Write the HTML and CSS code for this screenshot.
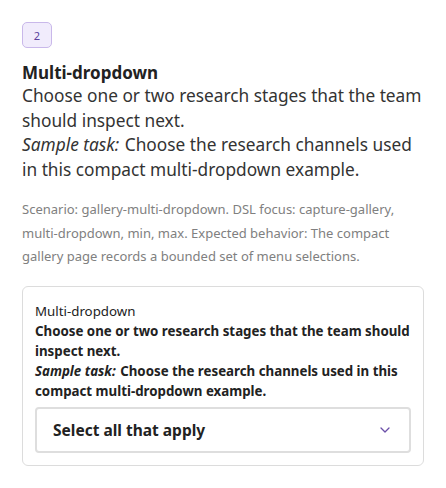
FILE: index.html
```html
<!DOCTYPE html>
<html>
<head>
<meta charset="utf-8">
<link rel="stylesheet" href="styles.css">
</head>
<body>
<div class="page">
  <div class="badge">2</div>
  <h1 class="title">Multi-dropdown</h1>
  <p class="desc">Choose one or two research stages that the team should inspect next.<br><em>Sample task:</em> <span>Choose the research channels used </span><span>in this compact multi-dropdown example.</span></p>
  <p class="meta">Scenario: gallery-multi-dropdown. DSL focus: capture-gallery, multi-dropdown, min, max. Expected behavior: The compact gallery page records a bounded set of menu selections.</p>
  <div class="card">
    <div class="card-label">Multi-dropdown</div>
    <div class="card-desc">Choose one or two research stages that the team should inspect next.<br><em>Sample task:</em> <span>Choose the research channels used in this </span><span>compact multi-dropdown example.</span></div>
    <div class="select">
      <span class="select-text">Select all that apply</span>
      <svg class="chev" width="12" height="8" viewBox="0 0 12 8"><path d="M2 2l4 4 4-4" fill="none" stroke="#6b4fa8" stroke-width="1.3" stroke-linecap="round" stroke-linejoin="round"/></svg>
    </div>
  </div>
</div>
</body>
</html>
```
FILE: styles.css
```css
html, body { margin: 0; padding: 0; background: #fff; }
body { font-family: "Noto Sans", "Open Sans", sans-serif; color: #222; }
.page { padding: 22px 22px 0 22px; }
.badge {
  width: 30px; height: 26px; box-sizing: border-box;
  border: 1px solid #c9b8ea; background: #f1ecfc; border-radius: 5px;
  color: #5b3f9c; font-size: 11px; display: flex; align-items: center; justify-content: center;
}
.title { font-size: 17px; font-weight: 700; margin: 14px 0 0 0; line-height: 22px; color: #222; }
.desc { font-size: 17.3px; line-height: 24.5px; margin: 0; color: #333; }
.desc em, .card-desc em { font-style: italic; padding-right: 1px; }
.meta { font-size: 13px; line-height: 23.5px; color: #808080; margin: 16px 0 0 0; }
.card {
  margin-top: 17px; border: 1px solid #dcdcdc; border-radius: 6px;
  padding: 14px 12px 12px 12px;
}
.card-label { font-size: 13.3px; line-height: 20px; color: #222; }
.card-desc { font-size: 13.3px; line-height: 20px; font-weight: 700; color: #222; }
.card-desc em { font-weight: 700; }
.select {
  margin-top: 6px; height: 46px; box-sizing: border-box;
  border: 2px solid #dedede; border-radius: 4px;
  display: flex; align-items: center; justify-content: space-between;
  padding: 0 18px 0 16px;
}
.select-text { font-size: 15.5px; font-weight: 700; color: #222; }
.chev { display: block; }
```
